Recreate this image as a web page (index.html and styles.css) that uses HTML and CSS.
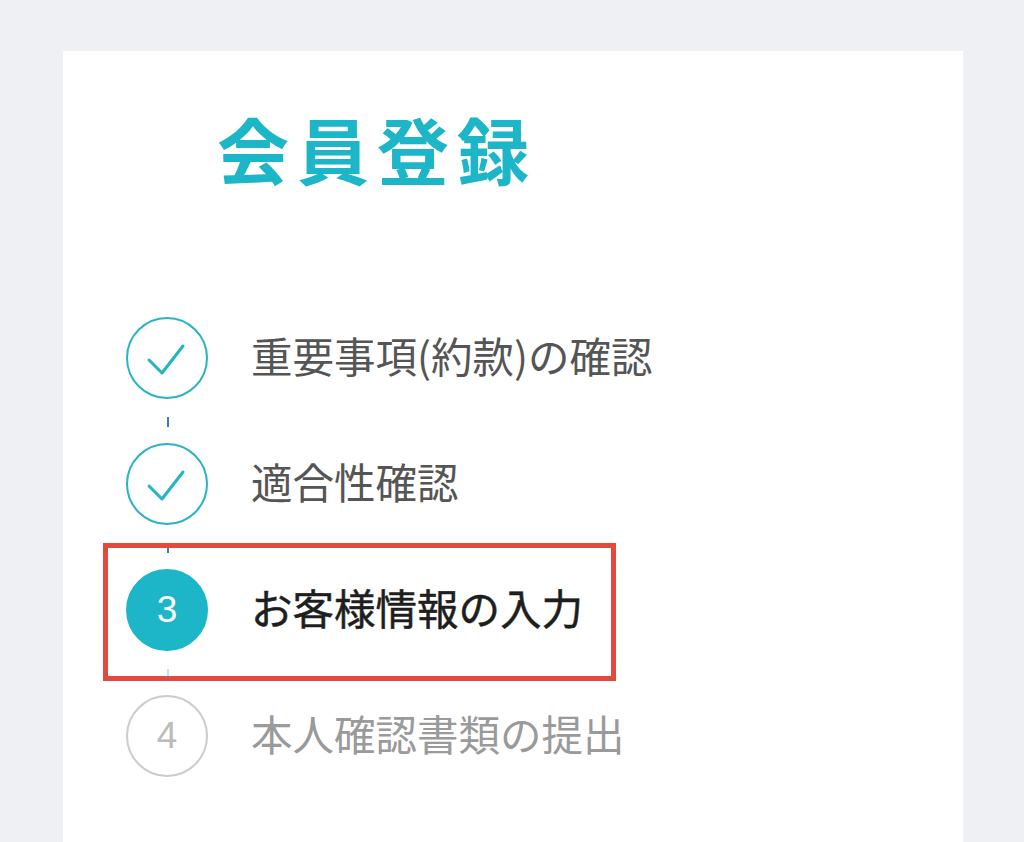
FILE: index.html
```html
<!DOCTYPE html>
<html lang="ja">
<head>
<meta charset="utf-8">
<title>会員登録</title>
<link rel="stylesheet" href="styles.css">
</head>
<body>
<main class="card">
  <h1 class="title">会員登録</h1>
  <ol class="steps">
    <li class="step done">
      <span class="circle"><svg viewBox="0 0 82 82" width="82" height="82"><polyline points="23,43 36,56 57,29" fill="none" stroke="#25b4c3" stroke-width="3" stroke-linecap="round" stroke-linejoin="round"/></svg></span>
      <span class="label">重要事項(約款)の確認</span>
    </li>
    <li class="step done">
      <span class="circle"><svg viewBox="0 0 82 82" width="82" height="82"><polyline points="23,43 36,56 57,29" fill="none" stroke="#25b4c3" stroke-width="3" stroke-linecap="round" stroke-linejoin="round"/></svg></span>
      <span class="label">適合性確認</span>
    </li>
    <li class="step current">
      <span class="highlight"></span>
      <span class="circle">3</span>
      <span class="label">お客様情報の入力</span>
    </li>
    <li class="step todo">
      <span class="circle">4</span>
      <span class="label">本人確認書類の提出</span>
    </li>
  </ol>
</main>
</body>
</html>
```

FILE: styles.css
```css
html, body {
  margin: 0;
  padding: 0;
  background: #eff0f4;
}
body {
  font-family: "Noto Sans CJK JP", "Noto Sans", sans-serif;
  height: 842px;
  overflow: hidden;
}
.card {
  margin: 51px 0 0 63px;
  width: 900px;
  height: 800px;
  background: #ffffff;
  padding-top: 61px;
  box-sizing: border-box;
}
.title {
  margin: 0 0 0 154px;
  font-size: 72px;
  line-height: 1;
  font-weight: 700;
  letter-spacing: 8px;
  color: #1cb6c8;
}
.steps {
  list-style: none;
  margin: 133px 0 0 63px;
  padding: 0;
  display: flex;
  flex-direction: column;
  gap: 44px;
}
.step {
  position: relative;
  display: flex;
  align-items: center;
  height: 82px;
}
.circle {
  position: relative;
  flex: none;
  width: 82px;
  height: 82px;
  box-sizing: border-box;
  border-radius: 50%;
  border: 2px solid #2ab4c2;
  display: flex;
  align-items: center;
  justify-content: center;
  font-family: "Liberation Sans", Arial, sans-serif;
  font-size: 37px;
}
.circle svg {
  position: absolute;
  left: -2px;
  top: -2px;
}
.step:not(:last-child) .circle::after {
  content: "";
  position: absolute;
  left: 39px;
  top: 98px;
  width: 2px;
  height: 10px;
  background: #3a7bbd;
}
.label {
  margin-left: 43px;
  margin-bottom: 4px;
  font-size: 41.5px;
  line-height: 1;
  color: #555555;
  white-space: nowrap;
}
.current .circle {
  background: #1cb6c8;
  border-color: #1cb6c8;
  color: #ffffff;
}
.current .circle::after {
  opacity: 0.25;
}
.current .label {
  color: #1e1e1e;
  font-weight: 400;
  -webkit-text-stroke: 0.5px #1e1e1e;
}
.todo .circle {
  border-color: #cccccc;
  color: #bbbbbb;
}
.todo .label {
  color: #9a9a9a;
}
.highlight {
  position: absolute;
  left: -23px;
  top: -26px;
  width: 513px;
  height: 138px;
  box-sizing: border-box;
  border: 5px solid #e24b3c;
  pointer-events: none;
}
```
